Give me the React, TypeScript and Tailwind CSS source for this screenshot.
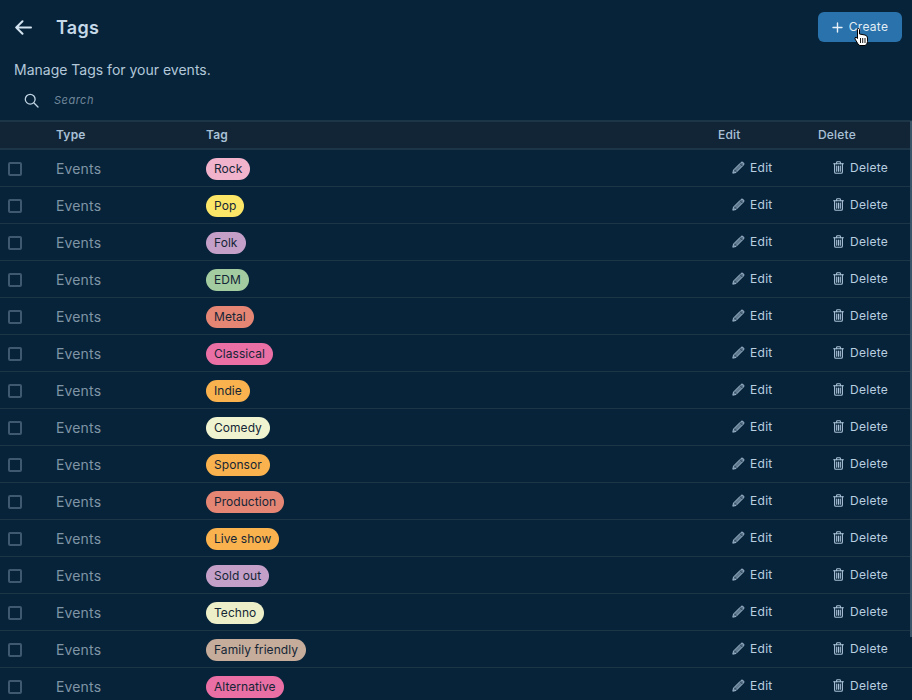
const tags: [string, string][] = [
  ["Rock", "bg-[#f1b2cc]"],
  ["Pop", "bg-[#fbe668]"],
  ["Folk", "bg-[#c4a0c8]"],
  ["EDM", "bg-[#a3cda1]"],
  ["Metal", "bg-[#e58675]"],
  ["Classical", "bg-[#e96fa5]"],
  ["Indie", "bg-[#f9b24d]"],
  ["Comedy", "bg-[#eff3cf]"],
  ["Sponsor", "bg-[#f9b24d]"],
  ["Production", "bg-[#e58675]"],
  ["Live show", "bg-[#f9b24d]"],
  ["Sold out", "bg-[#c4a0c8]"],
  ["Techno", "bg-[#ecefc8]"],
  ["Family friendly", "bg-[#c6ac9a]"],
  ["Alternative", "bg-[#e96fa5]"],
];

function Pencil() {
  return (
    <svg className="mb-[2px]" width="13" height="13" viewBox="0 0 13 13" fill="none">
      <path d="M0.8 12.2 L1.5 9 L9 1.5 Q9.9 0.7 10.9 1.3 L11.7 2.1 Q12.3 3.1 11.5 4 L4 11.5 Z" fill="#a9c1d6" fillOpacity="0.55" stroke="#a9c1d6" strokeWidth="0.9" strokeLinejoin="round" />
      <path d="M8 2.6 L10.4 5 M2.4 8.8 L4.2 10.6" stroke="#062238" strokeWidth="0.7" />
    </svg>
  );
}

function Trash() {
  return (
    <svg className="mb-[2px]" width="11" height="13" viewBox="0 0 11 13" fill="none" stroke="#a9c1d6" strokeWidth="1.1" strokeLinecap="round" strokeLinejoin="round">
      <path d="M0.6 2.7 H10.4" />
      <path d="M3.6 2.7 V1.4 Q3.6 0.7 4.3 0.7 H6.7 Q7.4 0.7 7.4 1.4 V2.7" />
      <path d="M1.6 2.7 V11 Q1.6 12.3 2.9 12.3 H8.1 Q9.4 12.3 9.4 11 V2.7" />
      <path d="M3.7 5 V10.2 M5.5 5 V10.2 M7.3 5 V10.2" />
    </svg>
  );
}

function Row({ tag, color }: { tag: string; color: string }) {
  return (
    <div className="flex h-[37px] items-center border-b border-[#1c3648]">
      <div className="flex w-[56px] pt-[2px] pl-[8px]">
        <span className="size-[14px] rounded-[2px] border-2 border-[#3f5a70]" />
      </div>
      <div className="w-[150px] text-[14px] tracking-[0.15px] text-[#7f95a6]">Events</div>
      <div className="flex flex-1 pt-[1px]">
        <span className={`inline-block rounded-full px-2 text-[12px] leading-[22px] tracking-[0.05px] text-[#142536] ${color}`}>{tag}</span>
      </div>
      <div className="flex w-[100px] items-center gap-[5px] pl-[14px] text-[12px] tracking-[0.3px] text-[#b9cfe0]">
        <Pencil />
        Edit
      </div>
      <div className="flex w-[94px] items-center gap-[6px] pl-[15px] text-[12px] tracking-[0.3px] text-[#b9cfe0]">
        <Trash />
        Delete
      </div>
    </div>
  );
}

export default function App() {
  return (
    <div className="relative h-[700px] w-[912px] overflow-hidden bg-[#072339] font-['Inter',sans-serif]">
      <div className="flex h-[60px] items-start justify-between pr-[10px] pl-[15px]">
        <div className="flex items-center pt-[14px]">
          <svg width="17" height="15" viewBox="0 0 17 15" fill="none" stroke="#d3e3ef" strokeWidth="2" strokeLinecap="round" strokeLinejoin="round">
            <path d="M1.2 7.5 H16 M7.5 1.2 L1.2 7.5 L7.5 13.8" />
          </svg>
          <h1 className="mt-[1px] ml-[24px] text-[18px] leading-[26px] font-semibold tracking-[0.3px] text-[#c5d9e8]">Tags</h1>
        </div>
        <div className="relative mt-[12px] flex h-[30px] w-[84px] items-center justify-center gap-[6px] rounded-[6px] bg-[#2a72ab] text-[12px] tracking-[0.3px] text-[#e2edf5]">
          <svg width="11" height="11" viewBox="0 0 11 11" stroke="#e8f1f8" strokeWidth="1.4" strokeLinecap="round">
            <path d="M5.5 1 V10 M1 5.5 H10" />
          </svg>
          Create
          <svg className="absolute top-[16px] left-[36px]" width="15" height="19" viewBox="0 0 15 19">
            <path d="M3.5 1.5 Q3.5 0.5 4.5 0.5 Q5.5 0.5 5.5 1.5 V6 L11 7 Q13.5 7.5 13.5 10 V13.5 Q13.5 16.5 11 17.5 H6 Q5 17.5 4 16 L1 11 Q0.5 9.5 2 9.2 L3.5 10.5 Z" fill="#fff" stroke="#000" strokeWidth="1" strokeLinejoin="round" />
            <path d="M6.5 10 V15 M8.7 10 V15 M11 10 V15" stroke="#000" strokeWidth="0.9" />
          </svg>
        </div>
      </div>
      <p className="pl-[14px] text-[14px] leading-[20px] text-[#b3c8d9]">Manage Tags for your events.</p>
      <div className="flex h-[40px] items-center pl-[24px]">
        <svg width="15" height="15" viewBox="0 0 15 15" fill="none" stroke="#c0d4e3" strokeWidth="1.3" strokeLinecap="round">
          <circle cx="6.2" cy="6.2" r="4.9" />
          <path d="M10 10 L14 14" />
        </svg>
        <span className="mt-[1px] ml-[15px] text-[11px] tracking-[0.5px] text-[#708699] italic">Search</span>
      </div>
      <div className="flex h-[30px] items-center border-y-2 border-[#1c3648] bg-[#122537] pb-[1px] text-[12px] font-semibold tracking-[0.2px] text-[#a9c1d6]">
        <div className="w-[56px]" />
        <div className="w-[150px]">Type</div>
        <div className="w-[512px]">Tag</div>
        <div className="w-[100px] font-medium">Edit</div>
        <div className="font-medium">Delete</div>
      </div>
      {tags.map(([t, c]) => (
        <Row key={t} tag={t} color={c} />
      ))}
      <div className="absolute top-[121px] right-0 h-[516px] w-[2px] bg-[#3a5468]" />
    </div>
  );
}
